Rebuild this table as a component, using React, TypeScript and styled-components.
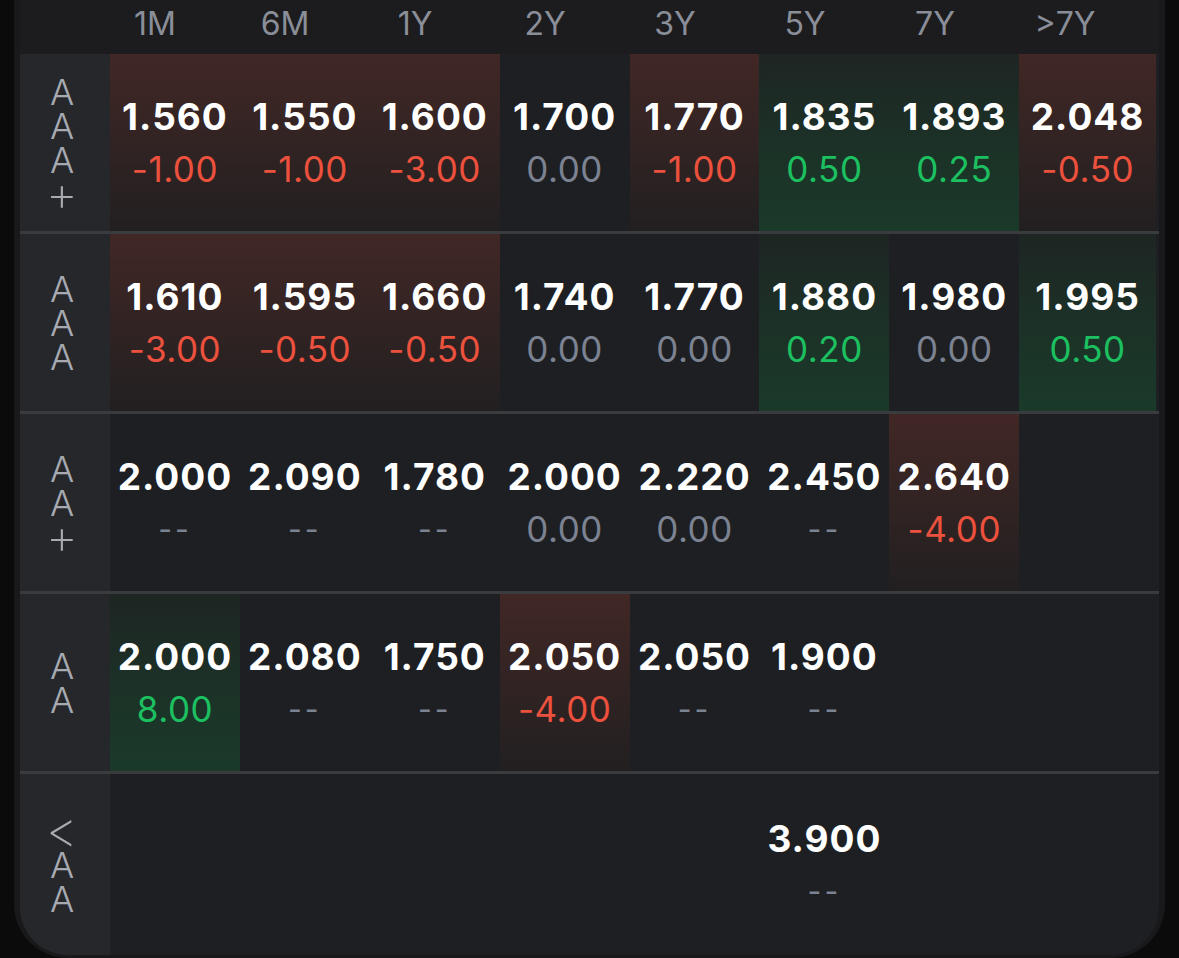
import React from "react";
import styled, { createGlobalStyle, css } from "styled-components";

const GlobalStyle = createGlobalStyle`
  html, body {
    margin: 0;
    padding: 0;
    background: #0b0b0b;
    font-family: Inter, "Noto Sans", "Liberation Sans", sans-serif;
  }
  * { box-sizing: border-box; }
`;

type Tone = "up" | "down" | "flat" | "none";

interface CellData {
  value?: string;
  change?: string;
  tone?: Tone;
  bg?: "red" | "green";
}

interface RowData {
  label: string;
  cells: CellData[];
}

const columns = ["1M", "6M", "1Y", "2Y", "3Y", "5Y", "7Y", ">7Y"];

const rows: RowData[] = [
  {
    label: "AAA+",
    cells: [
      { value: "1.560", change: "-1.00", tone: "down", bg: "red" },
      { value: "1.550", change: "-1.00", tone: "down", bg: "red" },
      { value: "1.600", change: "-3.00", tone: "down", bg: "red" },
      { value: "1.700", change: "0.00", tone: "flat" },
      { value: "1.770", change: "-1.00", tone: "down", bg: "red" },
      { value: "1.835", change: "0.50", tone: "up", bg: "green" },
      { value: "1.893", change: "0.25", tone: "up", bg: "green" },
      { value: "2.048", change: "-0.50", tone: "down", bg: "red" },
    ],
  },
  {
    label: "AAA",
    cells: [
      { value: "1.610", change: "-3.00", tone: "down", bg: "red" },
      { value: "1.595", change: "-0.50", tone: "down", bg: "red" },
      { value: "1.660", change: "-0.50", tone: "down", bg: "red" },
      { value: "1.740", change: "0.00", tone: "flat" },
      { value: "1.770", change: "0.00", tone: "flat" },
      { value: "1.880", change: "0.20", tone: "up", bg: "green" },
      { value: "1.980", change: "0.00", tone: "flat" },
      { value: "1.995", change: "0.50", tone: "up", bg: "green" },
    ],
  },
  {
    label: "AA+",
    cells: [
      { value: "2.000", change: "--", tone: "none" },
      { value: "2.090", change: "--", tone: "none" },
      { value: "1.780", change: "--", tone: "none" },
      { value: "2.000", change: "0.00", tone: "flat" },
      { value: "2.220", change: "0.00", tone: "flat" },
      { value: "2.450", change: "--", tone: "none" },
      { value: "2.640", change: "-4.00", tone: "down", bg: "red" },
      {},
    ],
  },
  {
    label: "AA",
    cells: [
      { value: "2.000", change: "8.00", tone: "up", bg: "green" },
      { value: "2.080", change: "--", tone: "none" },
      { value: "1.750", change: "--", tone: "none" },
      { value: "2.050", change: "-4.00", tone: "down", bg: "red" },
      { value: "2.050", change: "--", tone: "none" },
      { value: "1.900", change: "--", tone: "none" },
      {},
      {},
    ],
  },
  {
    label: "<AA",
    cells: [
      {},
      {},
      {},
      {},
      {},
      { value: "3.900", change: "--", tone: "none" },
      {},
      {},
    ],
  },
];

const Page = styled.div`
  display: flex;
  padding-left: 14px;
`;

const Frame = styled.div`
  width: 1151px;
  height: 958px;
  background: #19191b;
  padding: 0 6px 3px 6px;
  border-radius: 0 0 54px 54px;
`;

const Board = styled.div`
  height: 100%;
  background: #1e1f22;
  border-radius: 0 0 48px 48px;
  overflow: hidden;
  display: flex;
  flex-direction: column;
`;

const HeaderRow = styled.div`
  display: grid;
  grid-template-columns: 70px repeat(8, 130px);
  height: 54px;
  background: #1c1c1e;
`;

const HeadCell = styled.div`
  text-align: center;
  font-size: 32px;
  line-height: 48px;
  font-weight: 400;
  color: #8a8e98;
`;

const Row = styled.div<{ $last?: boolean }>`
  display: grid;
  grid-template-columns: 90px repeat(7, 129.9px) 1fr;
  padding-right: 3px;
  height: 180px;
  border-bottom: 3px solid #3a3b3f;
  ${(p) =>
    p.$last &&
    css`
      flex: 1;
      border-bottom: none;
    `}
`;

const LabelCell = styled.div`
  background: #26272b;
  display: flex;
  flex-direction: column;
  align-items: center;
  justify-content: center;
  padding-right: 6px;
`;

const Letter = styled.span<{ $symbol?: boolean }>`
  display: block;
  height: 34px;
  font-size: 36px;
  line-height: 34px;
  font-weight: 300;
  color: #a7aab1;
  ${(p) =>
    p.$symbol &&
    css`
      font-size: 50px;
      font-weight: 200;
      line-height: 32px;
    `}
`;

const Cell = styled.div<{ $bg?: "red" | "green" }>`
  display: flex;
  flex-direction: column;
  align-items: center;
  justify-content: center;
  ${(p) =>
    p.$bg === "red" &&
    css`
      background: linear-gradient(180deg, #412725 0%, #332423 45%, #221f21 100%);
    `}
  ${(p) =>
    p.$bg === "green" &&
    css`
      background: linear-gradient(0deg, #1a3a2a 0%, #1c3127 50%, #1e2523 100%);
    `}
`;

const Value = styled.div`
  font-size: 37px;
  line-height: 52px;
  font-weight: 700;
  letter-spacing: 1px;
  color: #ffffff;
`;

const toneColor: Record<Tone, string> = {
  up: "#1cc060",
  down: "#ec513d",
  flat: "#7b8291",
  none: "#7b8291",
};

const Change = styled.div<{ $tone: Tone }>`
  font-size: 35px;
  line-height: 52px;
  font-weight: 400;
  letter-spacing: 0.5px;
  color: ${(p) => toneColor[p.$tone]};
  ${(p) =>
    p.$tone === "none" &&
    css`
      letter-spacing: 3px;
      font-size: 30px;
    `}
`;

export default function App() {
  return (
    <>
      <GlobalStyle />
      <Page>
        <Frame>
          <Board>
            <HeaderRow>
              <div />
              {columns.map((c) => (
                <HeadCell key={c}>{c}</HeadCell>
              ))}
            </HeaderRow>
            {rows.map((r, i) => (
              <Row key={r.label} $last={i === rows.length - 1}>
                <LabelCell>
                  {r.label.split("").map((ch, j) => (
                    <Letter key={j} $symbol={ch === "+" || ch === "<"}>
                      {ch}
                    </Letter>
                  ))}
                </LabelCell>
                {r.cells.map((c, j) => (
                  <Cell key={j} $bg={c.bg}>
                    {c.value && <Value>{c.value}</Value>}
                    {c.change && <Change $tone={c.tone ?? "none"}>{c.change}</Change>}
                  </Cell>
                ))}
              </Row>
            ))}
          </Board>
        </Frame>
      </Page>
    </>
  );
}
